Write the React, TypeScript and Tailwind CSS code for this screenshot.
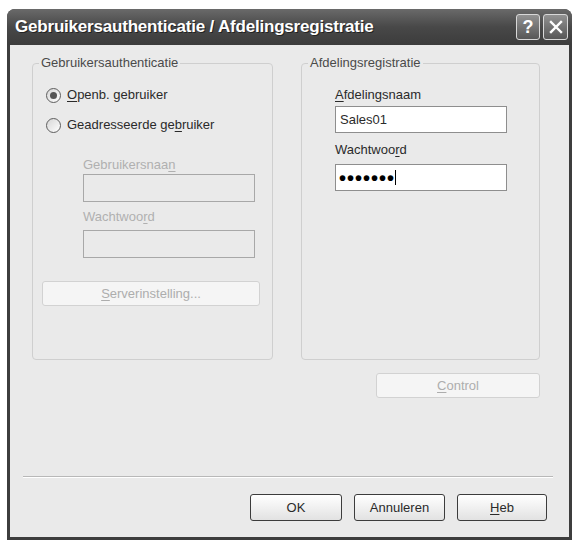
import type { ReactNode } from 'react'

// accelerator letter (underlined)
function K({ children }: { children: string }) {
  return <span className="underline underline-offset-[2px] decoration-1">{children}</span>
}

function Radio({ checked, children }: { checked?: boolean; children: ReactNode }) {
  return (
    <div className="flex items-center gap-[6px] h-[16px]">
      <span className="w-[15px] h-[15px] rounded-full border border-[#5e5e5e] bg-gradient-to-br from-[#d6d6d6] to-white flex items-center justify-center">
        {checked && <span className="w-[7px] h-[7px] rounded-full bg-[#555]" />}
      </span>
      <span className="text-[#2a2a2a]">{children}</span>
    </div>
  )
}

function Button({
  children,
  disabled,
  className = '',
}: {
  children: ReactNode
  disabled?: boolean
  className?: string
}) {
  return (
    <div
      className={`flex items-center justify-center rounded-[3px] border ${
        disabled
          ? 'border-[#d2d2d2] bg-[#f5f5f5] text-[#adadad]'
          : 'border-[#3c3c3c] bg-gradient-to-b from-white to-[#e2e2e2] text-[#2a2a2a]'
      } ${className}`}
    >
      {children}
    </div>
  )
}

function Group({ title, children, className = '' }: { title: string; children: ReactNode; className?: string }) {
  return (
    <div className={`relative h-[297px] rounded-[4px] border border-[#cfcfcf] ${className}`}>
      <span className="absolute -top-[9px] left-[6px] bg-[#eaeaea] px-[2px] leading-[16px] text-[#4a4a4a]">
        {title}
      </span>
      {children}
    </div>
  )
}

export default function App() {
  return (
    <div className="w-[579px] h-[542px] bg-white pt-[9px] pl-[7px] font-['Liberation_Sans',Arial,sans-serif] text-[13px]">
      <div className="w-[565px] h-[531px] flex flex-col rounded-t-[8px] overflow-hidden bg-[#3d3d3d]">
        {/* Title bar */}
        <div className="h-[36px] shrink-0 flex items-center pl-[8px] pr-[4px] bg-gradient-to-b from-[#6a6a6a] via-[#484848] to-[#3c3c3c]">
          <span className="flex-1 text-white font-bold text-[17px] tracking-[-0.2px] [text-shadow:1px_1px_0_#222]">
            Gebruikersauthenticatie / Afdelingsregistratie
          </span>
          <div className="flex gap-[3px]">
            <div className="w-[24px] h-[26px] rounded-[3px] border border-[#d8d8d8] bg-gradient-to-b from-[#929292] to-[#575757] flex items-center justify-center text-white font-bold text-[18px] leading-none">
              ?
            </div>
            <div className="w-[25px] h-[26px] rounded-[3px] border border-[#d8d8d8] bg-gradient-to-b from-[#929292] to-[#575757] flex items-center justify-center">
              <svg width="14" height="14" viewBox="0 0 14 14">
                <path d="M2 2 L12 12 M12 2 L2 12" stroke="white" strokeWidth="2.4" strokeLinecap="square" />
              </svg>
            </div>
          </div>
        </div>

        {/* Client area */}
        <div className="flex-1 mx-[3px] mb-[3px] bg-[#eaeaea] flex flex-col">
          <div className="flex gap-[28px] pl-[22px] pt-[18px]">
            <Group title="Gebruikersauthenticatie" className="w-[241px]">
              <div className="flex flex-col pt-[23px] pl-[13px]">
                <div className="flex flex-col gap-[14px]">
                  <Radio checked>
                    <K>O</K>penb. gebruiker
                  </Radio>
                  <Radio>
                    Geadresseerde ge<K>b</K>ruiker
                  </Radio>
                </div>
                <div className="pl-[37px] text-[#b0b0b0]">
                  <div className="mt-[24px] leading-[16px]">
                    Gebruikersnaa<K>n</K>
                  </div>
                  <div className="mt-[1px] w-[172px] h-[28px] border border-[#a8a8a8] bg-[#eaeaea]" />
                  <div className="mt-[7px] leading-[16px]">
                    Wachtwoo<K>r</K>d
                  </div>
                  <div className="mt-[5px] w-[172px] h-[28px] border border-[#a8a8a8] bg-[#eaeaea]" />
                </div>
                <Button disabled className="mt-[23px] -ml-[4px] w-[218px] h-[25px]">
                  <span>
                    <K>S</K>erverinstelling...
                  </span>
                </Button>
              </div>
            </Group>

            <Group title="Afdelingsregistratie" className="w-[239px]">
              <div className="flex flex-col pt-[23px] pl-[33px] text-[#2a2a2a]">
                <div className="leading-[16px]">
                  <K>A</K>fdelingsnaam
                </div>
                <div className="mt-[3px] w-[172px] h-[27px] border border-[#8e8e8e] bg-white flex items-center pl-[4px]">
                  Sales01
                </div>
                <div className="mt-[9px] leading-[16px]">
                  Wachtwoo<K>r</K>d
                </div>
                <div className="mt-[6px] w-[172px] h-[27px] border border-[#8e8e8e] bg-white flex items-center pl-[3px]">
                  <span className="text-[20px] leading-none tracking-[1px] text-black font-bold">•••••••</span>
                  <span className="w-[1px] h-[15px] bg-black" />
                </div>
              </div>
            </Group>
          </div>

          <div className="flex justify-end pr-[29px] mt-[13px]">
            <Button disabled className="w-[164px] h-[25px]">
              <span>
                <K>C</K>ontrol
              </span>
            </Button>
          </div>

          <div className="mt-[78px] ml-[13px] mr-[16px] h-[2px] border-t border-[#b8b8b8] border-b border-b-white" />

          <div className="flex justify-end gap-[12px] pr-[22px] mt-[16px]">
            <Button className="w-[92px] h-[27px]">OK</Button>
            <Button className="w-[91px] h-[27px]">Annuleren</Button>
            <Button className="w-[90px] h-[27px]">
              <span>
                <K>H</K>eb
              </span>
            </Button>
          </div>
        </div>
      </div>
    </div>
  )
}
